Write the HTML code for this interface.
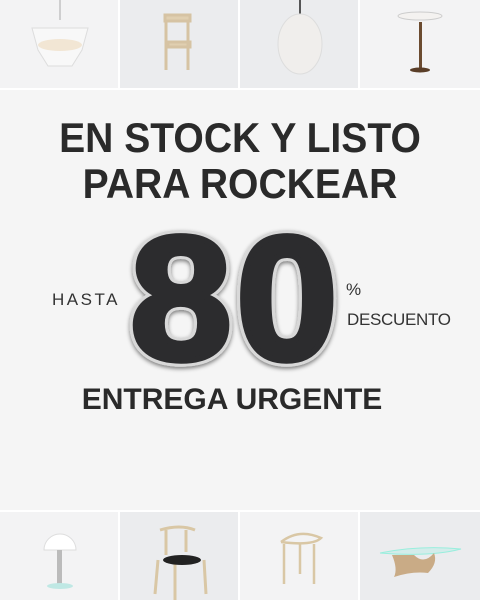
<!DOCTYPE html>
<html><head><meta charset="utf-8"><style>
*{margin:0;padding:0;box-sizing:border-box}
body{width:480px;height:600px;background:#fff;position:relative;overflow:hidden;font-family:"Liberation Sans",sans-serif;color:#2a2a2a}
.t{position:absolute;width:118px;height:88px}
.main{position:absolute;left:0;top:90px;width:480px;height:420px;background:#f5f5f5}
.h{position:absolute;left:0;width:480px;text-align:center;font-weight:bold;white-space:nowrap}
</style></head><body>
<div class="t" style="left:0;top:0;background:#f3f3f4"></div>
<div class="t" style="left:120px;top:0;background:#ebecee"></div>
<div class="t" style="left:240px;top:0;background:#ebecee"></div>
<div class="t" style="left:360px;top:0;width:120px;background:#f3f3f4"></div>
<div class="t" style="left:0;top:512px;background:#f3f3f4"></div>
<div class="t" style="left:120px;top:512px;background:#ebecee"></div>
<div class="t" style="left:240px;top:512px;background:#f3f3f4"></div>
<div class="t" style="left:360px;top:512px;width:120px;background:#ebecee"></div>
<svg style="position:absolute;left:0;top:0" width="480" height="600">
<line x1="60" y1="0" x2="60" y2="20" stroke="#aaa"/>
<path d="M32 28 L88 28 L82 50 L72 66 L48 66 L38 50 Z" fill="#f8f8f8" stroke="#ddd"/>
<ellipse cx="60" cy="45" rx="22" ry="6" fill="#f2e6d4"/>
<path d="M165 15 h25 v6 h-25z M166 20 v50 M188 20 v50 M168 42 h22 v5 h-22z" stroke="#d6c3a3" stroke-width="3" fill="#e0cfb0"/>
<line x1="300" y1="0" x2="300" y2="14" stroke="#555" stroke-width="2"/>
<ellipse cx="300" cy="44" rx="22" ry="30" fill="#f0eeec" stroke="#ddd"/>
<ellipse cx="420" cy="16" rx="22" ry="4" fill="#f4f2f0" stroke="#ccc"/>
<rect x="419" y="22" width="3" height="46" fill="#6b4b30"/>
<ellipse cx="420" cy="70" rx="10" ry="2.5" fill="#5a3e28"/>
<path d="M44 550 a16 16 0 0 1 32 0 z" fill="#fff" stroke="#ddd"/>
<rect x="57" y="550" width="5" height="34" fill="#bbb"/>
<ellipse cx="60" cy="586" rx="13" ry="3" fill="#bfe8e4"/>
<path d="M160 530 q20 -6 35 0 M166 530 v25 M186 530 v22 M158 560 l-3 34 M204 560 l2 34 M175 560 v40" stroke="#d9c7a5" stroke-width="3" fill="none"/>
<ellipse cx="182" cy="560" rx="19" ry="5" fill="#222"/>
<path d="M281 542 q18 -14 40 -4 q-8 8 -40 4 M284 544 v40 M314 544 v40 M300 544 v30" stroke="#d9c7a5" stroke-width="2.5" fill="none"/>
<path d="M380 553 q40 -8 81 -4 q-30 8 -81 4" fill="#d3ecea" stroke="#9ed"/>
<path d="M392 555 q6 14 2 22 q18 -6 34 -4 q10 -10 6 -20 q-10 12 -20 2 z" fill="#c9ab86"/>
</svg>
<div class="main"></div>
<div class="h" style="top:114px;font-size:42px;transform:scaleX(.93)">EN STOCK Y LISTO</div>
<div class="h" style="top:160px;font-size:42px;transform:scaleX(.93)">PARA ROCKEAR</div>
<svg style="position:absolute;left:0;top:0" width="480" height="600">
<defs><filter id="s" x="-10%" y="-10%" width="120%" height="120%"><feGaussianBlur in="SourceAlpha" stdDeviation="2"/><feOffset dx="0" dy="2"/><feComponentTransfer><feFuncA type="linear" slope=".5"/></feComponentTransfer><feMerge><feMergeNode/><feMergeNode in="SourceGraphic"/></feMerge></filter></defs>
<g transform="translate(236,359) scale(1.04,1)">
<text x="0" y="0" text-anchor="middle" font-family="Liberation Sans" font-weight="bold" font-size="176" fill="#ddd" stroke="#d8d8d8" stroke-width="12" stroke-linejoin="round" filter="url(#s)" letter-spacing="4">80</text>
<text x="0" y="0" text-anchor="middle" font-family="Liberation Sans" font-weight="bold" font-size="176" fill="#2c2c2e" stroke="#2c2c2e" stroke-width="6" stroke-linejoin="round" letter-spacing="4">80</text>
</g>
</svg>
<div style="position:absolute;left:52px;top:290px;font-size:17px;letter-spacing:2.5px;color:#333">HASTA</div>
<div style="position:absolute;left:346px;top:280px;font-size:17px;color:#333">%</div>
<div style="position:absolute;left:347px;top:310px;font-size:17px;color:#333;letter-spacing:-.3px">DESCUENTO</div>
<div class="h" style="top:383px;font-size:30px;left:-8px">ENTREGA URGENTE</div>
</body></html>
